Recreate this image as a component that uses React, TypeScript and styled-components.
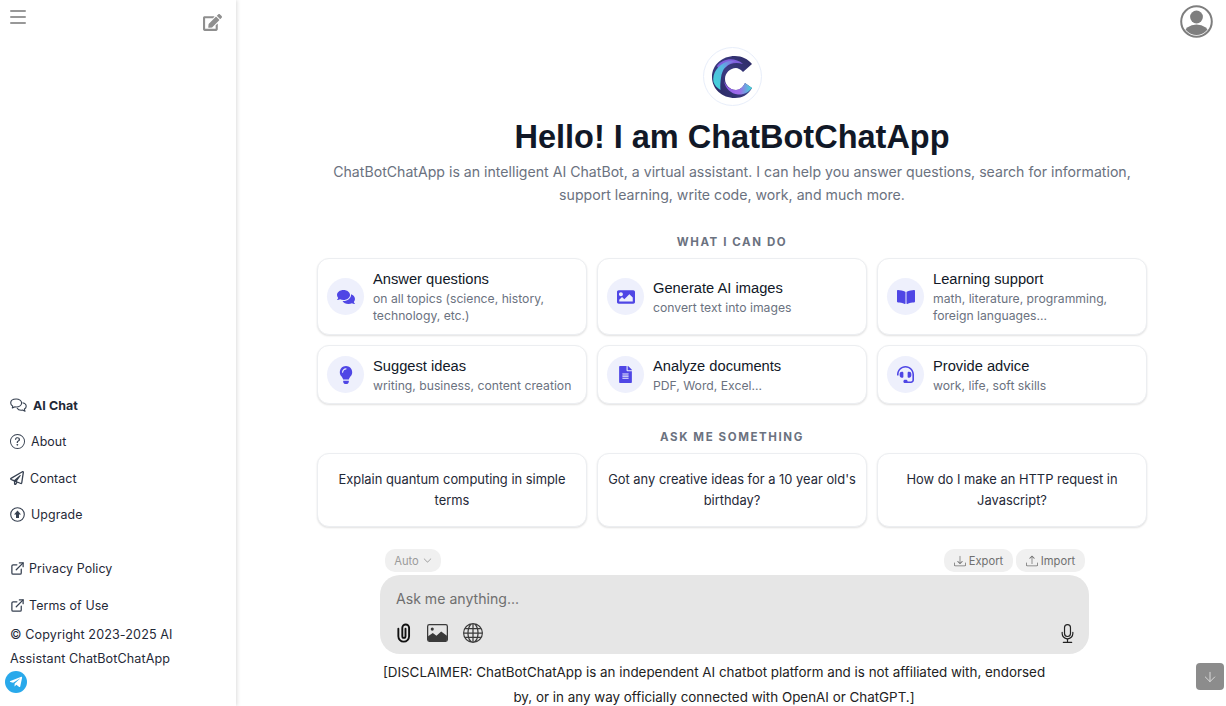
import React from "react";
import styled, { createGlobalStyle } from "styled-components";
import { BsQuestionCircle, BsGlobe, BsMic, BsDownload, BsUpload, BsChevronDown } from "react-icons/bs";
import { FaComments, FaImage, FaBookOpen, FaLightbulb, FaFileAlt, FaHeadset, FaEdit, FaTelegramPlane, FaRegPaperPlane } from "react-icons/fa";
import { FiExternalLink } from "react-icons/fi";
import { ArrowDown } from "lucide-react";

const Global = createGlobalStyle`
  html, body { margin: 0; padding: 0; height: 706px; overflow: hidden; background: #fff; }
  * { box-sizing: border-box; }
  body { font-family: Inter, "Liberation Sans", sans-serif; color: #111827; }
`;

const Shell = styled.div`
  position: relative;
  display: flex;
  width: 1226px;
  height: 706px;
  overflow: hidden;
`;

const Sidebar = styled.aside`
  flex: 0 0 236px;
  display: flex;
  flex-direction: column;
  justify-content: space-between;
  height: 706px;
  background: #fff;
  box-shadow: 1px 0 4px rgba(0, 0, 0, 0.14);
  padding: 8px 0 13px 10px;
`;

const SideTop = styled.div`
  display: flex;
  justify-content: space-between;
  align-items: flex-start;
  padding-right: 14px;
  color: #8f8f8f;
`;

const EditWrap = styled.span`
  display: block;
  margin-top: 5px;
  line-height: 0;
`;

const BurgerBars = styled.span`
  display: flex;
  flex-direction: column;
  gap: 4px;
  width: 16px;
  margin: 2px 0 0 0;
`;

const BurgerBar = styled.i`
  display: block;
  height: 2px;
  border-radius: 1px;
  background: #989898;
`;

const SideBottom = styled.div`
  display: flex;
  flex-direction: column;
`;

const NavItem = styled.a<{ $bold?: boolean; $gap?: number; $after?: number }>`
  display: flex;
  align-items: center;
  gap: ${(p) => p.$gap ?? 6}px;
  height: 20px;
  margin-bottom: ${(p) => p.$after ?? 16.4}px;
  font-size: 12.4px;
  letter-spacing: 0.1px;
  font-weight: ${(p) => (p.$bold ? 700 : 400)};
  color: #1f2937;
  svg { flex: none; color: #374151; }
`;

const Copyright = styled.p`
  margin: -2px 0 0;
  font-size: 12.6px;
  line-height: 24px;
  width: 190px;
  color: #1f2937;
  letter-spacing: 0.1px;
`;

const TelegramBadge = styled.span`
  display: flex;
  align-items: center;
  justify-content: center;
  width: 22px;
  height: 22px;
  margin: 0 0 0 -5px;
  border-radius: 50%;
  background: #29a9eb;
  color: #fff;
`;

const Main = styled.main`
  flex: 1;
  display: flex;
  flex-direction: column;
  align-items: center;
  padding: 47px 0 0 2px;
  height: 706px;
`;

const LogoCircle = styled.div`
  width: 59px;
  height: 59px;
  border-radius: 50%;
  border: 1px solid #e8eefa;
  display: flex;
  align-items: center;
  justify-content: center;
  flex: none;
`;

const Title = styled.h1`
  margin: 11px 0 0;
  font-family: "Liberation Sans", Arial, sans-serif;
  font-size: 32.5px;
  line-height: 40px;
  font-weight: 700;
  color: #111827;
`;

const Intro = styled.p`
  margin: 4px 0 0;
  width: 830px;
  text-align: center;
  font-size: 14.14px;
  line-height: 22.5px;
  color: #6b7280;
`;

const SectionLabel = styled.h2<{ $top: number }>`
  margin: ${(p) => p.$top}px 0 0;
  font-size: 11.5px;
  line-height: 14px;
  font-weight: 700;
  letter-spacing: 1.6px;
  color: #6b7280;
  text-transform: uppercase;
`;

const Grid = styled.div`
  display: grid;
  grid-template-columns: repeat(3, 270px);
  column-gap: 10px;
  row-gap: 10px;
  width: 830px;
  margin-top: 9px;
`;

const Card = styled.div<{ $h: number }>`
  display: flex;
  align-items: center;
  gap: 9px;
  padding: 8px 4px 8px 9px;
  border: 1px solid #eceef1;
  border-radius: 12px;
  background: #fff;
  box-shadow: 0 1px 2px rgba(0, 0, 0, 0.12);
  height: ${(p) => p.$h}px;
`;

const IconDisc = styled.span`
  flex: none;
  width: 37px;
  height: 37px;
  border-radius: 50%;
  background: #eef0fc;
  color: #4f46e5;
  display: flex;
  align-items: center;
  justify-content: center;
`;

const CardText = styled.div`
  min-width: 0;
`;

const CardTitle = styled.div`
  font-family: "Liberation Sans", Arial, sans-serif;
  font-size: 14.7px;
  line-height: 20px;
  color: #111827;
`;

const CardSub = styled.div`
  font-size: 12.2px;
  line-height: 17px;
  margin-top: 1px;
  color: #6b7280;
`;

const Prompt = styled.div`
  display: flex;
  align-items: center;
  justify-content: center;
  height: 74px;
  padding: 1px 10px 0;
  text-align: center;
  font-size: 12.9px;
  line-height: 20.5px;
  color: #1f2937;
  border: 1px solid #eceef1;
  border-radius: 12px;
  background: #fff;
  box-shadow: 0 1px 2px rgba(0, 0, 0, 0.12);
`;

const Composer = styled.section`
  width: 709px;
  margin: 22px 0 0 5px;
  flex: none;
`;

const ToolRow = styled.div`
  display: flex;
  justify-content: space-between;
  padding: 0 4px 0 5px;
  height: 23px;
`;

const Pills = styled.div`
  display: flex;
  gap: 3px;
`;

const Pill = styled.span`
  display: inline-flex;
  align-items: center;
  justify-content: center;
  gap: 3px;
  width: 69px;
  height: 23px;
  border-radius: 10px;
  background: #f0f0f0;
  font-size: 11.2px;
  color: #6f6f6f;
`;

const AutoPill = styled(Pill)`
  width: 56px;
  color: #9a9a9a;
  gap: 4px;
`;

const InputBox = styled.div`
  margin-top: 3px;
  height: 79px;
  border-radius: 20px;
  background: #e6e6e6;
  padding: 14px 12px 0 16px;
`;

const Placeholder = styled.div`
  font-size: 14.1px;
  line-height: 20px;
  color: #6f6f6f;
`;

const InputTools = styled.div`
  display: flex;
  align-items: center;
  justify-content: space-between;
  margin-top: 14px;
  color: #3a3a3a;
`;

const ToolGroup = styled.div`
  display: flex;
  align-items: center;
  gap: 15px;
`;

const Disclaimer = styled.p`
  margin: 6px 36px 0 0;
  width: 680px;
  flex: none;
  text-align: center;
  font-size: 13.4px;
  line-height: 24.5px;
  color: #222;
`;

const AvatarButton = styled.span`
  position: absolute;
  top: 5px;
  right: 13px;
  line-height: 0;
`;

const ScrollDown = styled.span`
  position: absolute;
  left: 1196px;
  top: 663px;
  width: 28px;
  height: 27px;
  border-radius: 4px;
  background: #8c8c8c;
  color: #d9d9d9;
  display: flex;
  align-items: center;
  justify-content: center;
`;

const Logo = () => (
  <svg width="44" height="46" viewBox="0 0 44 44">
    <defs>
      <linearGradient id="navy" x1="1" y1="0" x2="0" y2="1">
        <stop offset="0" stopColor="#2c2b63" />
        <stop offset="0.5" stopColor="#3b3a82" />
        <stop offset="1" stopColor="#26265c" />
      </linearGradient>
      <linearGradient id="ribbon" x1="0" y1="0" x2="1" y2="0">
        <stop offset="0" stopColor="#8e5ee6" />
        <stop offset="0.55" stopColor="#a06bea" />
        <stop offset="1" stopColor="#3edcd6" />
      </linearGradient>
      <linearGradient id="swoosh" x1="0" y1="1" x2="1" y2="0">
        <stop offset="0" stopColor="#3fd8d8" />
        <stop offset="0.6" stopColor="#56b8e0" />
        <stop offset="1" stopColor="#8d63e3" />
      </linearGradient>
    </defs>
    <path d="M42 9 L33 17 C30 14 28 13 26 13 C20 13 15 18 15 24 C15 30 20 35 26 35 C30 35 33 32 35 28 L42 33 C38 40 32 43 25 43 C12 43 2 34 2 22 C2 10 12 1 25 1 C32 1 38 4 42 9 Z" fill="url(#navy)" />
    <path d="M7 11 C13 3 25 2 33 9 C26 7 20 8 16 12 C12 15 9 16 7 11 Z" fill="#7f5fdc" />
    <path d="M3.5 27 C2 18 8 10 17 6.5 C20 5.5 23 5.5 25 6.5 C17 8.5 12 14 11 23 C10.5 26 10 31 10.5 35 C7 33 4.5 30 3.5 27 Z" fill="url(#swoosh)" />
    <path d="M14 26 C15 33 21 39 28 39.5 C34 40 39 37 42 33 L35 28 C33 32 30 35 26 35 C20 35 16 31 14 26 Z" fill="url(#ribbon)" />
  </svg>
);

const ChatBubbles = () => (
  <svg width="17" height="15" viewBox="0 0 17 15" fill="none" stroke="#374151" strokeWidth="1.1" strokeLinejoin="round">
    <path d="M6.2 1 C3 1 .7 2.7 .7 5 C.7 6.4 1.5 7.5 2.8 8.2 L2.3 10 L4.6 8.9 C5.1 9 5.6 9 6.2 9 C9.2 9 11.6 7.2 11.6 5 C11.6 2.7 9.2 1 6.2 1 Z" />
    <path d="M12.5 4.8 C14.6 5.2 16.2 6.6 16.2 8.3 C16.2 9.5 15.5 10.5 14.4 11.1 L15 13.3 L12.6 12.1 C10.4 12.5 8 11.7 7 10" />
  </svg>
);

const UpgradeIcon = () => (
  <svg width="15" height="15" viewBox="0 0 15 15">
    <circle cx="7.5" cy="7.5" r="6.8" fill="none" stroke="#374151" strokeWidth="1.1" />
    <path d="M7.5 3.4 L11 7.4 H9 V11 H6 V7.4 H4 Z" fill="#374151" />
  </svg>
);

const AvatarIcon = () => (
  <svg width="33" height="33" viewBox="0 0 33 33">
    <defs>
      <clipPath id="avatarClip"><circle cx="16.5" cy="16.5" r="13.6" /></clipPath>
    </defs>
    <circle cx="16.5" cy="16.5" r="15.3" fill="none" stroke="#7e7e7e" strokeWidth="2" />
    <circle cx="16.5" cy="12" r="6.4" fill="#7e7e7e" />
    <ellipse cx="16.5" cy="29" rx="12.5" ry="9.5" fill="#7e7e7e" clipPath="url(#avatarClip)" />
  </svg>
);

const Clip = () => (
  <svg width="16" height="20" viewBox="0 0 17 21" fill="none" stroke="#111" strokeWidth="2" strokeLinecap="round">
    <path d="M2.5 6 V14 a5.7 5.7 0 0 0 11.4 0 V5 a3.6 3.6 0 0 0 -7.2 0 V14 a1.7 1.7 0 0 0 3.4 0 V6" />
  </svg>
);

const Picture = () => (
  <svg width="20" height="17" viewBox="0 0 20 17" style={{ width: 21, height: 18 }}>
    <rect x="0.6" y="0.6" width="18.8" height="15.8" rx="1.6" fill="none" stroke="#3a3a3a" strokeWidth="1.2" />
    <circle cx="5" cy="4.8" r="1.5" fill="#3a3a3a" />
    <path d="M1 15.5 V11.5 L5.5 8.5 L9 11 L13.5 7 L19 11 V15 a1 1 0 0 1 -1 1 H2 a1 1 0 0 1 -1 -.5 Z" fill="#3a3a3a" />
  </svg>
);

const features = [
  { icon: <FaComments size={18} />, title: "Answer questions", sub: "on all topics (science, history, technology, etc.)" },
  { icon: <FaImage size={18} />, title: "Generate AI images", sub: "convert text into images" },
  { icon: <FaBookOpen size={18} />, title: "Learning support", sub: "math, literature, programming, foreign languages..." },
  { icon: <FaLightbulb size={18} />, title: "Suggest ideas", sub: "writing, business, content creation" },
  { icon: <FaFileAlt size={17} />, title: "Analyze documents", sub: "PDF, Word, Excel..." },
  { icon: <FaHeadset size={17} />, title: "Provide advice", sub: "work, life, soft skills" },
];

const prompts = [
  "Explain quantum computing in simple terms",
  "Got any creative ideas for a 10 year old's birthday?",
  "How do I make an HTTP request in Javascript?",
];

export default function App() {
  return (
    <Shell>
      <Global />
      <Sidebar>
        <SideTop>
          <BurgerBars><BurgerBar /><BurgerBar /><BurgerBar /></BurgerBars>
          <EditWrap><FaEdit size={19} /></EditWrap>
        </SideTop>
        <SideBottom>
          <NavItem $bold><ChatBubbles />AI Chat</NavItem>
          <NavItem><BsQuestionCircle size={15} />About</NavItem>
          <NavItem $gap={6}><FaRegPaperPlane size={14} />Contact</NavItem>
          <NavItem $after={34}><UpgradeIcon />Upgrade</NavItem>
          <NavItem $gap={4}><FiExternalLink size={15} />Privacy Policy</NavItem>
          <NavItem $gap={4} $after={10}><FiExternalLink size={15} />Terms of Use</NavItem>
          <Copyright>© Copyright 2023-2025 AI Assistant ChatBotChatApp</Copyright>
          <TelegramBadge><FaTelegramPlane size={14} /></TelegramBadge>
        </SideBottom>
      </Sidebar>
      <Main>
        <LogoCircle><Logo /></LogoCircle>
        <Title>Hello! I am ChatBotChatApp</Title>
        <Intro>
          ChatBotChatApp is an intelligent AI ChatBot, a virtual assistant. I can help you answer questions, search for information, support learning, write code, work, and much more.
        </Intro>
        <SectionLabel $top={29}>What I can do</SectionLabel>
        <Grid>
          {features.map((f, i) => (
            <Card key={f.title} $h={i < 3 ? 77 : 59}>
              <IconDisc>{f.icon}</IconDisc>
              <CardText>
                <CardTitle>{f.title}</CardTitle>
                <CardSub>{f.sub}</CardSub>
              </CardText>
            </Card>
          ))}
        </Grid>
        <SectionLabel $top={26}>Ask me something</SectionLabel>
        <Grid>
          {prompts.map((p) => <Prompt key={p}>{p}</Prompt>)}
        </Grid>
        <Composer>
          <ToolRow>
            <AutoPill>Auto <BsChevronDown size={9} /></AutoPill>
            <Pills>
              <Pill><BsDownload size={12} /> Export</Pill>
              <Pill><BsUpload size={12} /> Import</Pill>
            </Pills>
          </ToolRow>
          <InputBox>
            <Placeholder>Ask me anything...</Placeholder>
            <InputTools>
              <ToolGroup>
                <Clip />
                <Picture />
                <BsGlobe size={20} />
              </ToolGroup>
              <BsMic size={19} style={{ color: "#222" }} />
            </InputTools>
          </InputBox>
        </Composer>
        <Disclaimer>
          [DISCLAIMER: ChatBotChatApp is an independent AI chatbot platform and is not affiliated with, endorsed by, or in any way officially connected with OpenAI or ChatGPT.]
        </Disclaimer>
      </Main>
      <AvatarButton><AvatarIcon /></AvatarButton>
      <ScrollDown><ArrowDown size={16} strokeWidth={1.5} /></ScrollDown>
    </Shell>
  );
}
